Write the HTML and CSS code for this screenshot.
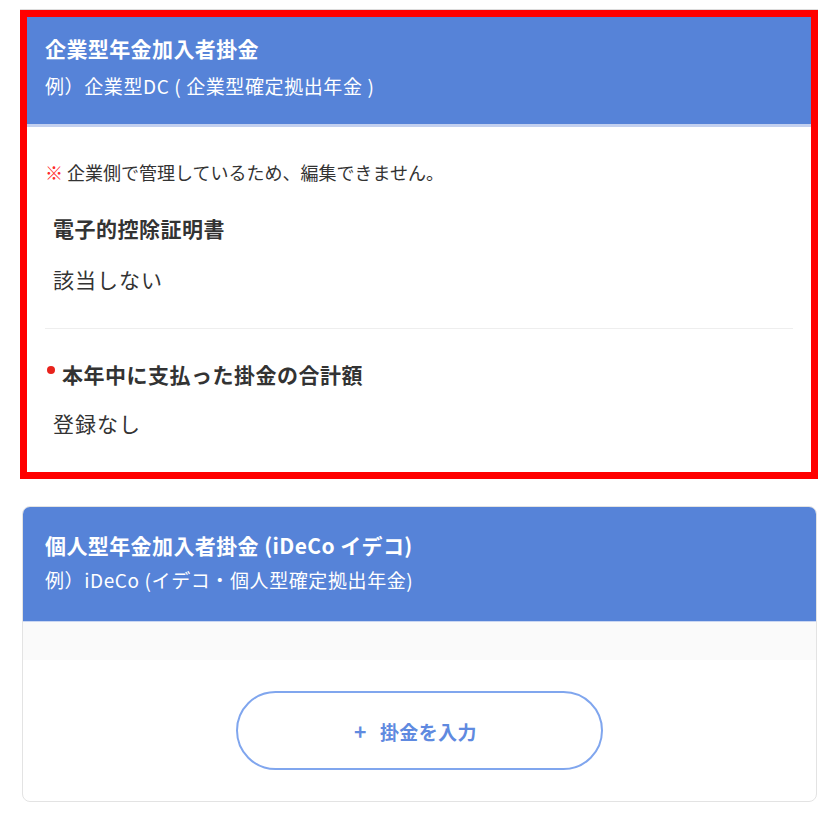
FILE: index.html
```html
<!DOCTYPE html>
<html lang="ja">
<head>
<meta charset="utf-8">
<link rel="stylesheet" href="styles.css">
</head>
<body>
<div class="page">
  <section class="card card-selected">
    <header class="card-head">
      <h2 class="card-title">企業型年金加入者掛金</h2>
      <p class="card-sub">例）企業型DC ( 企業型確定拠出年金 )</p>
    </header>
    <div class="card-body">
      <p class="note"><span class="note-mark">※</span> 企業側で管理しているため、編集できません。</p>
      <div class="field">
        <h3 class="field-label">電子的控除証明書</h3>
        <p class="field-value">該当しない</p>
      </div>
      <div class="divider"></div>
      <div class="field field-second">
        <h3 class="field-label"><span class="req-dot"></span>本年中に支払った掛金の合計額</h3>
        <p class="field-value">登録なし</p>
      </div>
    </div>
  </section>

  <section class="card card-plain">
    <header class="card-head card-head-2">
      <h2 class="card-title">個人型年金加入者掛金 (iDeCo イデコ)</h2>
      <p class="card-sub">例）iDeCo (イデコ・個人型確定拠出年金)</p>
    </header>
    <div class="band"></div>
    <div class="action">
      <button class="add-btn" type="button"><span class="plus">+</span>掛金を入力</button>
    </div>
  </section>
</div>
</body>
</html>
```

FILE: styles.css
```css
html, body {
  margin: 0;
  padding: 0;
  background: #ffffff;
}

body {
  font-family: "Noto Sans CJK JP", "Noto Sans", sans-serif;
  color: #333333;
}

.page {
  padding: 10px 20px 0 20px;
}

.card {
  box-sizing: border-box;
  background: #ffffff;
}

.card-selected {
  border: 7px solid #ff0000;
  box-shadow: 0 -1px 0 #dcdcdc;
}

.card-head {
  background: #5683d8;
  color: #ffffff;
  padding: 16px 18px 24px 18px;
  border-bottom: 3px solid #c3d0ef;
}

.card-title {
  margin: 0;
  font-size: 21px;
  line-height: 30px;
  font-weight: 700;
  letter-spacing: 0.4px;
}

.card-sub {
  margin: 9px 0 0 0;
  font-size: 19px;
  line-height: 28px;
  font-weight: 400;
  letter-spacing: 0.6px;
}

.card-body {
  padding: 31px 18px 34px 18px;
}

.note {
  margin: 0;
  font-size: 18px;
  line-height: 28px;
  color: #333333;
}

.note-mark {
  color: #ff2a2a;
}

.field {
  padding: 0 8px;
  margin-top: 27px;
}

.field-second {
  margin-top: 30px;
}

.field-label {
  margin: 0;
  font-size: 21px;
  line-height: 30px;
  font-weight: 700;
  color: #333333;
  letter-spacing: 0.5px;
}

.req-dot {
  display: inline-block;
  width: 8px;
  height: 8px;
  border-radius: 50%;
  background: #e8231c;
  margin: 0 7px 0 -6px;
  vertical-align: 9px;
}

.field-value {
  margin: 21px 0 0 0;
  font-size: 21px;
  line-height: 30px;
  color: #333333;
  letter-spacing: 1px;
}

.field-second .field-value {
  margin-top: 19px;
}

.divider {
  height: 1px;
  background: #eeeeee;
  margin-top: 34px;
}

.card-plain {
  margin: 27px 1px 0 2px;
  border: 1px solid #e3e3e3;
  border-radius: 8px;
  overflow: hidden;
}

.card-head-2 {
  padding: 23px 22px 27px 22px;
  border-bottom: 1px solid #c9d6f2;
}

.card-head-2 .card-sub {
  margin-top: 6px;
}

.band {
  height: 38px;
  background: #fafafa;
}

.action {
  display: flex;
  justify-content: center;
  padding: 31px 0 31px 0;
}

.add-btn {
  box-sizing: border-box;
  width: 367px;
  height: 79px;
  border: 2px solid #80a6ee;
  border-radius: 40px;
  background: #ffffff;
  color: #5f8ae0;
  font-family: "Noto Sans CJK JP", "Noto Sans", sans-serif;
  font-size: 19px;
  font-weight: 700;
  letter-spacing: 0.4px;
  padding: 0 8px 0 0;
}

.plus {
  font-size: 21px;
  margin-right: 13px;
}
```
